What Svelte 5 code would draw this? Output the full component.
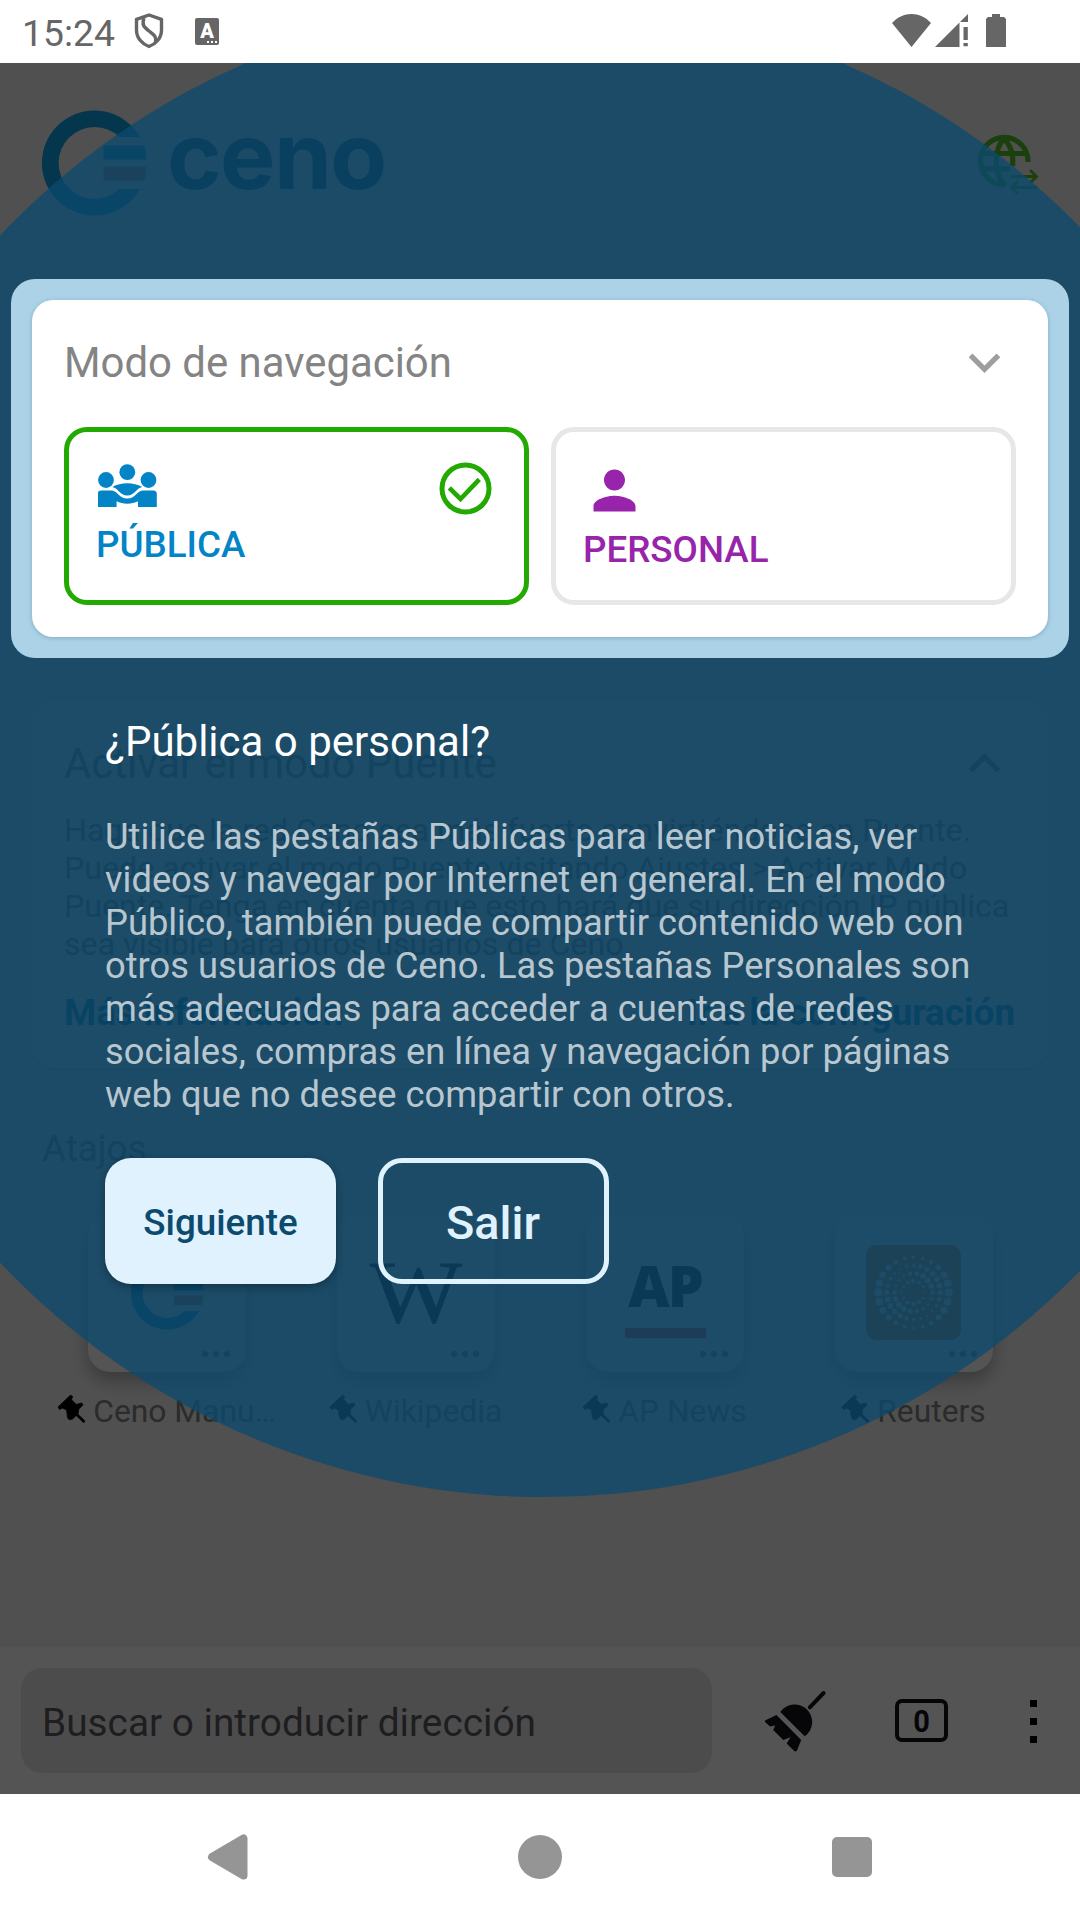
<script>
  const bridgeLines = [
    'Haga que la red Ceno sea más fuerte convirtiéndose en Puente.',
    'Puede activar el modo Puente visitando Ajustes > Activar Modo',
    'Puente. Tenga en cuenta que esto hará que su dirección IP pública',
    'sea visible para otros usuarios de Ceno.'
  ];
  const tourLines = [
    'Utilice las pestañas Públicas para leer noticias, ver',
    'videos y navegar por Internet en general. En el modo',
    'Público, también puede compartir contenido web con',
    'otros usuarios de Ceno. Las pestañas Personales son',
    'más adecuadas para acceder a cuentas de redes',
    'sociales, compras en línea y navegación por páginas',
    'web que no desee compartir con otros.'
  ];
  const shortcuts = [
    { id: 'ceno', label: 'Ceno Manu…' },
    { id: 'wiki', label: 'Wikipedia' },
    { id: 'ap', label: 'AP News' },
    { id: 'reuters', label: 'Reuters' }
  ];

  // Concentric dotted rings; the dot size swells along one axis per ring.
  const rings = [
    { r: 35.3, n: 24, min: 1.5, amp: 2.4, phase: 0 },
    { r: 26.8, n: 24, min: 1.1, amp: 1.8, phase: -0.5 },
    { r: 19, n: 18, min: 1.2, amp: 1.7, phase: -0.8 },
    { r: 11.5, n: 12, min: 1.1, amp: 1, phase: -1.5 }
  ];
  const dots = rings.flatMap(({ r, n, min, amp, phase }) =>
    Array.from({ length: n }, (_, i) => {
      const a = (i / n) * Math.PI * 2;
      return {
        x: 47.5 + r * Math.cos(a),
        y: 47.5 + r * Math.sin(a),
        r: min + amp * Math.pow(Math.abs(Math.cos(a - phase)), 1.6)
      };
    })
  );
</script>

{#snippet cenoMark(cls)}
  <svg class={cls} viewBox="0 0 105 106">
    <path
      d="M98 27 A52.5 52.5 0 1 0 98 79 H77.5 A36 36 0 1 1 77.5 27 Z"
      fill="#0ea5e9"
    />
    <path d="M61.5 35.5 H102.2 A52.5 52.5 0 0 1 104.6 49.5 H61.5 Z" fill="#0ea5e9" />
    <path d="M61.5 56.5 H104.6 A52.5 52.5 0 0 1 102.2 70.5 H61.5 Z" fill="#f57a60" />
  </svg>
{/snippet}

<div class="screen">
  <header class="status">
    <div class="status-left">
      <span class="clock">15:24</span>
      <svg class="shield" width="30" height="36" viewBox="0 0 30 36" fill="none" stroke="#666" stroke-width="3.4" stroke-linejoin="round">
        <path d="M15 2 L27.5 6.3 V17 C27.5 25 22 31 15 33.5 C8 31 2.5 25 2.5 17 V6.3 Z" />
        <path d="M10 5 C7.5 12 10 14 15 18 C20 22 22.5 23 21.5 29" />
      </svg>
      <span class="badge">A<i></i></span>
    </div>
    <div class="status-right">
      <svg width="39" height="33" viewBox="0 0 39 33"><path d="M19.5 33 L0 9 C11 -3 28 -3 39 9 Z" fill="#666" /></svg>
      <svg class="signal" width="33" height="33" viewBox="0 0 33 33" fill="#666">
        <path d="M0 33 L24.5 8.5 V33 Z M25 8 L33 0 V8 Z M28.5 13 h4.3 v13 h-4.3 Z M28.5 29 h4.3 v3.2 h-4.3 Z" />
      </svg>
      <svg class="battery" width="20" height="33" viewBox="0 0 20 33"><path d="M6 0 H14 V3 H18 L20 5 V33 H0 V5 L2 3 H6 Z" fill="#666" /></svg>
    </div>
  </header>

  <main class="stage">
    <div class="home">
      <div class="brand">
        {@render cenoMark('mark')}
        <span class="wordmark">ceno</span>
        <svg class="globe" width="62" height="62" viewBox="0 0 62 62" fill="none" stroke="#52c22c" stroke-width="5.2">
          <path d="M49.9 27 A23.7 23.7 0 1 0 27 49.7" />
          <path d="M4 18.5 H48 M4 33.8 H32" />
          <path d="M26 3.5 C16 14 15 38 27 50.5 M26 3.5 C33 11 36 20 34.5 31" />
          <path d="M33 41.5 H58 M52 35 L58.5 41.5 L52 48" stroke-width="2.9" />
          <path d="M59 52.5 H33 M40 46 L33.5 52.5 L40 59" stroke-width="2.9" />
        </svg>
      </div>

      <section class="bridge">
        <div class="row">
          <h2>Activar el modo Puente</h2>
          <svg width="63" height="63" viewBox="0 0 24 24"><path d="M12 8l-6 6 1.41 1.41L12 10.83l4.59 4.58L18 14z" fill="#8a8a8a" /></svg>
        </div>
        <p>
          {#each bridgeLines as line}<span>{line}</span>{/each}
        </p>
        <div class="links"><b>Más información</b><b>Ir a la configuración</b></div>
      </section>

      <h3>Atajos</h3>
      <div class="shortcuts">
        {#each shortcuts as s}
          <div class="shortcut">
            <div class="tile">
              {#if s.id === 'ceno'}
                {@render cenoMark('mark-small')}
              {:else if s.id === 'wiki'}
                <svg width="95" height="95" viewBox="0 0 95 95"><text class="w" x="1" y="76" textLength="92" lengthAdjust="spacingAndGlyphs">W</text></svg>
              {:else if s.id === 'ap'}
                <div class="ap"><span>AP</span><i></i></div>
              {:else}
                <svg class="dotted" width="95" height="95" viewBox="0 0 95 95">
                  <rect width="95" height="95" rx="10" fill="#fb8033" />
                  {#each dots as d}<circle cx={d.x} cy={d.y} r={d.r} fill="#fff" />{/each}
                </svg>
              {/if}
              <span class="more"><i></i><i></i><i></i></span>
            </div>
            <div class="label">
              <svg width="28" height="28" viewBox="0 0 28 28">
                <path d="M12.4 .3 L14.6 1.4 L13.5 4.8 L18.3 9.4 L23.8 8 L25 10 L20.8 14 L20.2 18.5 L14.5 24 C12 25.3 9.8 24.5 9.4 22 L8.6 15 L4.5 13 L1.6 14.5 L0 12 Z" stroke="#000" stroke-width=".8" stroke-linejoin="round" />
                <path d="M14 15 L25.7 26.2" stroke="#000" stroke-width="2.8" stroke-linecap="round" />
              </svg>
              <span>{s.label}</span>
            </div>
          </div>
        {/each}
      </div>
    </div>

    <div class="toolbar">
      <div class="address">Buscar o introducir dirección</div>
      <svg class="broom" width="61" height="61" viewBox="0 0 61 61" fill="#15141a">
        <path d="M15.3 21 A17.5 17.5 0 1 1 39.7 45.3 Z" />
        <path d="M11.5 24 L36.2 49 L32 59.5 C31 60.8 29.8 60.5 29 59.8 L21.6 52.5 L25.6 46.2 L18.2 49 L8.2 39 L10.2 34.6 L5 35.4 L0 31 V29.4 Z" />
        <path d="M44.8 16.3 L58.6 2" stroke="#15141a" stroke-width="4" stroke-linecap="round" />
      </svg>
      <div class="tabs"><span>0</span></div>
      <div class="menu"><i></i><i></i><i></i></div>
    </div>

    <div class="overlay">
      <div class="disc"></div>
      <div class="tour">
        <section class="spotlight">
          <div class="mode">
            <div class="row">
              <h2>Modo de navegación</h2>
              <svg width="63" height="63" viewBox="0 0 24 24"><path d="M16.59 8.59L12 13.17 7.41 8.59 6 10l6 6 6-6z" fill="#9e9e9e" /></svg>
            </div>
            <div class="options">
              <div class="option public">
                <div>
                  <svg class="people" width="59" height="43" viewBox="0 0 59 43" fill="#0284c7">
                    <circle cx="8" cy="16" r="7.9" />
                    <circle cx="29.3" cy="8.2" r="7.9" />
                    <circle cx="50.5" cy="16" r="7.9" />
                    <path d="M14.3 23 C23 18 35.5 18 44.2 23 C38 24 37 31.5 29.3 31.5 C21.5 31.5 20.5 24 14.3 23 Z" />
                    <path d="M0 43 V29 Q0 26.5 3 26.5 H13 C20 26.5 20.5 34.5 29.3 34.5 C38 34.5 38.5 26.5 45.5 26.5 H55.5 Q58.8 26.5 58.8 30 V43 H40 V37.3 C34 40.5 24.5 40.5 18.6 37.3 V43 Z" />
                  </svg>
                  <span>PÚBLICA</span>
                </div>
                <svg class="check" width="53" height="53" viewBox="0 0 53 53" fill="none" stroke="#22aa02" stroke-width="5">
                  <circle cx="26.5" cy="26.5" r="23.5" />
                  <path d="M10.3 25.8 L21.5 37 L40.3 17.3" stroke-width="4.6" />
                </svg>
              </div>
              <div class="option personal">
                <div>
                  <svg width="63" height="63" viewBox="0 0 24 24" fill="#9724aa"><path d="M12 12c2.21 0 4-1.79 4-4s-1.79-4-4-4-4 1.79-4 4 1.79 4 4 4zm0 2c-2.67 0-8 1.34-8 4v2h16v-2c0-2.66-5.33-4-8-4z" /></svg>
                  <span>PERSONAL</span>
                </div>
              </div>
            </div>
          </div>
        </section>
        <div class="copy">
          <h1>¿Pública o personal?</h1>
          <p>
            {#each tourLines as line}<span>{line}</span>{/each}
          </p>
          <div class="actions">
            <button class="next">Siguiente</button>
            <button class="exit">Salir</button>
          </div>
        </div>
      </div>
    </div>
  </main>

  <nav class="system">
    <svg width="41" height="46" viewBox="0 0 41 46"><path d="M4 23 L35.5 4.5 V41.5 Z" fill="#959595" stroke="#959595" stroke-width="8" stroke-linejoin="round" /></svg>
    <i class="home-key"></i>
    <i class="recent-key"></i>
  </nav>
</div>

<style>
  :global(body) { margin: 0; background: #fff; }
  h1, h2, h3, p { margin: 0; font-weight: 400; }
  svg { display: block; flex: none; overflow: visible; }
  i { display: block; }

  .screen {
    width: 1080px;
    height: 1920px;
    display: flex;
    flex-direction: column;
    overflow: hidden;
    font-family: Roboto, "Liberation Sans", sans-serif;
    font-kerning: normal;
  }

  .status {
    height: 63px;
    display: flex;
    justify-content: space-between;
    background: #fff;
    color: #666;
  }
  .status-left, .status-right { display: flex; align-items: flex-start; }
  .status-left { padding-left: 22px; }
  .status-right { padding: 14px 74px 0 0; }
  .clock { width: 112px; margin-top: 12px; font-size: 37.3px; line-height: 43px; font-weight: 450; }
  .shield { margin-top: 13px; }
  .badge {
    display: flex;
    flex-direction: column;
    align-items: center;
    position: relative;
    width: 24px;
    height: 27px;
    margin: 18px 0 0 31px;
    border-radius: 2px;
    background: #666;
    color: #fff;
    font-size: 20px;
    line-height: 26px;
    font-weight: 900;
  }
  .badge i {
    position: absolute;
    right: 2px;
    bottom: 2px;
    width: 10px;
    height: 2px;
    background: repeating-linear-gradient(90deg, #fff 0 2px, #666 2px 4px);
  }
  .signal { margin-left: 4px; }
  .battery { margin-left: 18px; }

  .stage {
    position: relative;
    height: 1731px;
    display: flex;
    flex-direction: column;
    overflow: hidden;
    background: #f3f3f3;
  }
  .home { flex: 1; display: flex; flex-direction: column; }
  .brand { height: 151px; padding: 47px 40px 0 42px; display: flex; align-items: flex-start; }
  .mark { width: 105px; height: 106px; }
  .mark-small { width: 73px; height: 74px; }
  .wordmark {
    width: 220px;
    margin: -5px 0 0 20px;
    font: 700 93px/100px Inter, sans-serif;
    letter-spacing: -1.6px;
    color: #075985;
  }
  .globe { margin: 25px 0 0 auto; }

  .bridge {
    margin: 440px 32px 0;
    height: 367px;
    padding: 31px 32px 0;
    box-sizing: border-box;
    border-radius: 21px;
    background: #fff;
    color: #828282;
    box-shadow: 0 1px 3px rgba(0, 0, 0, .2);
  }
  .row { height: 63px; display: flex; justify-content: space-between; align-items: center; }
  .row h2 { font-size: 41.9px; line-height: 49px; }
  p span { display: block; white-space: nowrap; }
  .bridge p { margin-top: 16px; font-size: 32.15px; line-height: 38px; }
  .links {
    display: flex;
    justify-content: space-between;
    margin: 28px 1px 0 0;
    font-size: 36.75px;
    line-height: 43px;
    color: #0284c7;
  }
  .home h3 { margin: 59px 0 0 42px; font-size: 36.75px; line-height: 43px; color: #828282; }
  .shortcuts { display: flex; margin: 44px 0 0 42.5px; }
  .shortcut { width: 249px; display: flex; flex-direction: column; align-items: center; }
  .tile {
    position: relative;
    width: 158px;
    height: 158px;
    display: flex;
    align-items: center;
    justify-content: center;
    border-radius: 22px;
    background: #fff;
    box-shadow: 0 10px 18px rgba(0, 0, 0, .24), 0 2px 26px rgba(0, 0, 0, .06);
  }
  .w { font: 88px "Liberation Serif", serif; stroke: #000; stroke-width: .8px; }
  .ap { display: flex; flex-direction: column; align-items: center; width: 81px; padding-top: 12px; }
  .ap span { margin-top: -4px; font: 900 57px/58px "Open Sans", sans-serif; letter-spacing: -2px; }
  .ap i { width: 81px; height: 10px; margin-top: 14px; background: #ff322e; }
  .dotted { margin: -1px 0 0 -1px; }
  .more { position: absolute; right: 16px; bottom: 15px; display: flex; gap: 5px; }
  .more i { width: 6px; height: 6px; border-radius: 50%; background: #828282; }
  .label {
    display: flex;
    justify-content: center;
    gap: 7px;
    margin-top: 21px;
    font-size: 31.8px;
    line-height: 37px;
    color: #828282;
    white-space: nowrap;
  }
  .label svg { margin-top: 2px; }

  .toolbar {
    height: 147px;
    padding: 21px 0 0 21px;
    box-sizing: border-box;
    display: flex;
    align-items: flex-start;
    background: #fff;
    color: #15141a;
  }
  .address {
    width: 691px;
    height: 105px;
    padding-left: 21px;
    box-sizing: border-box;
    border-radius: 21px;
    background: #e7e7e7;
    font-size: 38.8px;
    line-height: 109px;
    color: #5b5b66;
  }
  .broom { margin: 23px 0 0 53px; }
  .tabs {
    width: 53px;
    height: 43px;
    box-sizing: border-box;
    margin: 31px 0 0 69px;
    border: 4px solid #15141a;
    border-radius: 7px;
    text-align: center;
    font-size: 31.5px;
    line-height: 37px;
    font-weight: 700;
  }
  .tabs span { display: block; transform: scaleX(.92); }
  .menu { display: flex; flex-direction: column; gap: 11px; margin: 32px 0 0 82px; }
  .menu i { width: 7px; height: 7px; background: #000; }

  .overlay { position: absolute; inset: 0; background: rgba(0, 0, 0, .67); }
  .disc {
    position: absolute;
    left: -204.5px;
    top: -62px;
    width: 1496px;
    height: 1496px;
    border-radius: 50%;
    background: rgba(12, 74, 110, .77);
  }
  .tour { position: relative; padding: 216px 11px 0; }
  .spotlight { height: 379px; padding: 21px; box-sizing: border-box; border-radius: 24px; background: #abd2e6; }
  .mode {
    height: 337px;
    padding: 31px 32px 0;
    box-sizing: border-box;
    border-radius: 21px;
    background: #fff;
    color: #848484;
    box-shadow: 0 1px 4px rgba(0, 60, 100, .25);
  }
  .options { display: flex; gap: 22px; margin-top: 33px; }
  .option {
    flex: 0 0 465px;
    height: 178px;
    box-sizing: border-box;
    display: flex;
    justify-content: space-between;
    border: 5px solid #e7e7e7;
    border-radius: 23px;
    padding: 27px 27px 0;
    font-size: 36.75px;
    line-height: 43px;
    font-weight: 500;
  }
  .option span { display: block; }
  .public { border-color: #22aa02; padding-right: 32px; color: #0284c7; }
  .people { margin: 5px 0 16px 2px; }
  .public .check { margin-top: 3px; }
  .personal { color: #9724aa; }
  .personal span { margin-top: 6px; }

  .copy { padding: 59px 94px 0; color: #fff; }
  .copy h1 { font-size: 42px; line-height: 49px; }
  .copy p { margin-top: 49px; font-size: 36.3px; line-height: 43px; color: rgba(255, 255, 255, .7); }
  .actions { display: flex; gap: 42px; margin-top: 42px; }
  button {
    width: 231px;
    height: 126px;
    padding: 2px 0 0;
    box-sizing: border-box;
    border: 0;
    border-radius: 26px;
    font: 500 36.75px/43px Roboto, sans-serif;
  }
  .next { background: #e0f2fe; color: #0c4a6e; box-shadow: 0 3px 8px rgba(0, 0, 0, .3); }
  .exit { padding: 4px 1px 0 0; border: 5px solid #e0f2fe; border-radius: 24px; background: none; color: #e0f2fe; font-size: 46.8px; line-height: 55px; }

  .system { height: 126px; display: flex; align-items: center; justify-content: center; background: #fff; }
  .home-key { width: 44px; height: 44px; margin: 0 270px 0 269px; border-radius: 50%; background: #959595; }
  .recent-key { width: 40px; height: 40px; border-radius: 5px; background: #959595; }
</style>
